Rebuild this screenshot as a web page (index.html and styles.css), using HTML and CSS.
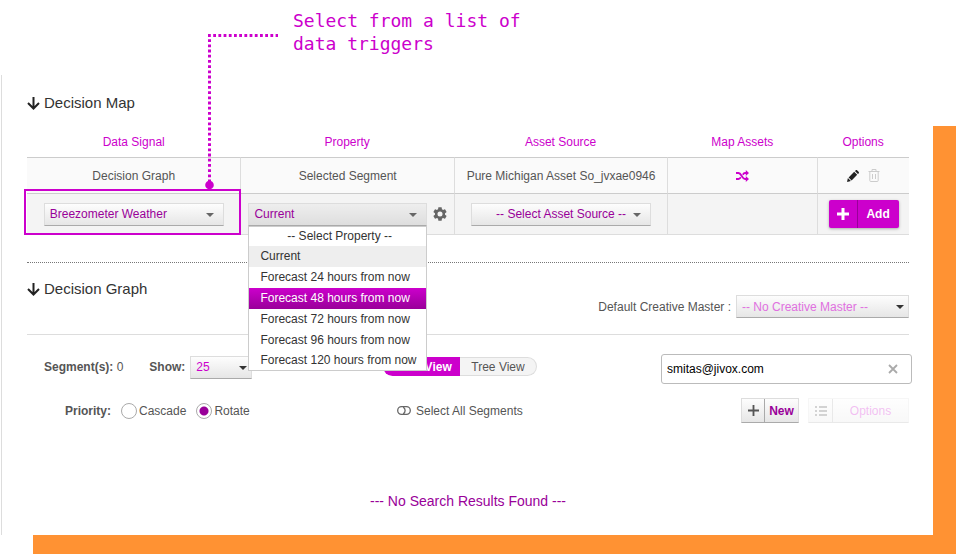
FILE: index.html
```html
<!DOCTYPE html>
<html lang="en">

<head>
  <meta charset="UTF-8">
  <meta name="viewport" content="width=device-width, initial-scale=1.0">
  <title>Decision Map</title>
  <link rel="stylesheet" href="styles.css">
</head>

<body>
  <div class="callout">
    <p>Select from a list of<br>data triggers</p>
    <svg class="connector" width="76" height="158" viewBox="0 0 76 158">
      <path d="M4 2.500H74M5.500 6.200V150" fill="none" stroke="#c0c" stroke-width="3" stroke-dasharray="2.800 2.400" />
      <circle cx="5.500" cy="152" r="4.300" fill="#c0c" />
    </svg>
  </div>

  <div class="stage">
    <main class="panel">
      <h2>
        <svg class="arrow" width="13" height="13" viewBox="0 0 13 13"><path d="M6.500 0v11M1 6l5.500 5.500L12 6" /></svg>
        Decision Map
      </h2>

      <table class="map">
        <thead>
          <tr>
            <th class="wide">Data Signal</th>
            <th class="wide">Property</th>
            <th class="wide">Asset Source</th>
            <th class="mid">Map Assets</th>
            <th>Options</th>
          </tr>
        </thead>
        <tbody>
          <tr class="saved">
            <td>Decision Graph</td>
            <td>Selected Segment</td>
            <td>Pure Michigan Asset So_jvxae0946</td>
            <td>
              <button class="icon" aria-label="Map assets">
                <svg width="13" height="12" viewBox="0 0 13 12"><path d="M0 3h2.500C5.500 3 6 9 9 9h2M0 9h2.500c1 0 1.700-.7 2.300-1.700M6.800 4.700C7.400 3.700 8 3 9 3h2" fill="none" stroke="#c0c" stroke-width="1.800" /><path d="M9.800 0L13 3l-3.200 3zM9.800 6L13 9l-3.200 3z" fill="#c0c" /></svg>
              </button>
            </td>
            <td>
              <div class="icons">
                <button class="icon" aria-label="Edit">
                  <svg width="12" height="12" viewBox="0 0 12 12"><path d="M0 12l.9-3.900 3 3zM1.600 7.400l5.600-5.600 3 3-5.600 5.600zM7.900 1.100l.7-.7c.5-.5 1.200-.5 1.700 0l1.300 1.300c.5.500.5 1.200 0 1.700l-.7.7z" fill="#222" /></svg>
                </button>
                <button class="icon" aria-label="Delete">
                  <svg width="12" height="13" viewBox="0 0 12 13"><path d="M.5 2.500h11M4 2.500v-2h4v2M1.800 2.500v9q0 1 1 1h6.400q1 0 1-1v-9M4.500 5v5M7.500 5v5" fill="none" stroke="#ccc" /></svg>
                </button>
              </div>
            </td>
          </tr>
          <tr class="editing">
            <td class="marked">
              <div class="drop">
                <select aria-label="Data signal"><option>Breezometer Weather</option></select>
              </div>
            </td>
            <td>
              <div class="property">
                <div class="drop open">
                  <select aria-label="Property"><option>Current</option></select>
                  <ul class="menu" role="listbox" aria-label="Property list">
                    <li class="none" role="option">-- Select Property --</li>
                    <li class="current" role="option">Current</li>
                    <li role="option">Forecast 24 hours from now</li>
                    <li class="active" role="option" aria-selected="true">Forecast 48 hours from now</li>
                    <li role="option">Forecast 72 hours from now</li>
                    <li role="option">Forecast 96 hours from now</li>
                    <li role="option">Forecast 120 hours from now</li>
                  </ul>
                </div>
                <button class="icon" aria-label="Property settings">
                  <svg width="14" height="14" viewBox="2 2 20 20"><path fill="#666" d="M19.140 12.940c.04-.3.060-.61.060-.94 0-.32-.02-.64-.07-.94l2.030-1.580c.18-.14.230-.41.120-.61l-1.920-3.320c-.12-.22-.37-.29-.59-.22l-2.390.96c-.5-.38-1.030-.7-1.620-.94l-.36-2.540c-.04-.24-.24-.41-.48-.41h-3.840c-.24 0-.43.170-.47.410l-.36 2.540c-.59.240-1.130.570-1.620.940l-2.390-.96c-.22-.08-.47 0-.59.220L2.740 8.870c-.12.210-.08.470.120.610l2.030 1.580c-.05.300-.09.630-.09.940s.02.640.070.940l-2.030 1.580c-.18.140-.23.410-.12.610l1.920 3.320c.12.220.37.290.59.220l2.390-.96c.5.380 1.030.7 1.620.940l.36 2.540c.05.240.24.410.48.410h3.840c.24 0 .44-.17.470-.41l.36-2.540c.59-.24 1.130-.56 1.620-.94l2.390.96c.22.080.47 0 .59-.22l1.920-3.320c.12-.22.070-.47-.12-.61zM12 15.600A3.600 3.600 0 1 1 12 8.400a3.600 3.600 0 0 1 0 7.200z" /></svg>
                </button>
              </div>
            </td>
            <td>
              <div class="drop centered">
                <select aria-label="Asset source"><option>-- Select Asset Source --</option></select>
              </div>
            </td>
            <td></td>
            <td>
              <button class="split add">
                <span class="sign"><svg width="12" height="12" viewBox="0 0 12 12"><path d="M6 0v12M0 6h12" /></svg></span>
                <span class="word">Add</span>
              </button>
            </td>
          </tr>
        </tbody>
      </table>

      <section class="graph">
        <header class="graph-head">
          <h2>
            <svg class="arrow" width="13" height="13" viewBox="0 0 13 13"><path d="M6.500 0v11M1 6l5.500 5.500L12 6" /></svg>
            Decision Graph
          </h2>
          <div class="master">
            <label for="master">Default Creative Master :</label>
            <div class="drop dark">
              <select id="master"><option>-- No Creative Master --</option></select>
            </div>
          </div>
        </header>

        <div class="tools">
          <div class="counts">
            <span><b>Segment(s):</b> 0</span>
            <label for="show">Show:</label>
            <div class="drop small">
              <select id="show"><option>25</option></select>
            </div>
            <span>In View</span>
          </div>
          <div class="views">
            <button class="active">Form View</button>
            <button>Tree View</button>
          </div>
          <div class="search">
            <input type="text" value="smitas@jivox.com" aria-label="Search">
            <button class="icon" aria-label="Clear">
              <svg width="10" height="10" viewBox="0 0 10 10"><path d="M1 1l8 8M9 1L1 9" fill="none" stroke="#aaa" stroke-width="1.800" /></svg>
            </button>
          </div>

          <div class="priority">
            <b>Priority:</b>
            <label><input type="radio" name="priority">Cascade</label>
            <label><input type="radio" name="priority" checked>Rotate</label>
          </div>
          <button class="select-all">
            <svg width="14" height="9" viewBox="0 0 14 9"><path d="M4.500.7h5a3.800 3.800 0 0 1 0 7.600h-5a3.800 3.800 0 0 1 0-7.600zM6.200 1.200a3.800 3.800 0 0 1 0 6.600" fill="none" stroke="#666" stroke-width="1.300" /></svg>
            Select All Segments
          </button>
          <div class="actions">
            <button class="split">
              <span class="sign"><svg width="11" height="11" viewBox="0 0 12 12"><path d="M6 0v12M0 6h12" /></svg></span>
              <span class="word">New</span>
            </button>
            <button class="split options" disabled>
              <span class="sign"><svg width="12" height="10" viewBox="0 0 12 10"><path d="M0 1h2M0 5h2M0 9h2M4 1h8M4 5h8M4 9h8" /></svg></span>
              <span class="word">Options</span>
            </button>
          </div>
        </div>

        <p class="empty">--- No Search Results Found ---</p>
      </section>
    </main>
  </div>
</body>

</html>
```
FILE: styles.css
```css
* {
  margin: 0;
  padding: 0;
  box-sizing: border-box;
}

body {
  background-color: #fff;
  color: #555;
  font: 12px/16px "Liberation Sans", Arial, sans-serif;
}

button,
input,
select {
  font: inherit;
  color: inherit;
}

button {
  border: 0;
  background: none;
  cursor: pointer;
}

li {
  list-style: none;
}

svg {
  display: block;
}

/* note above the panel */
.callout {
  position: relative;
  height: 75px;
  padding: 9px 0 0 293px;
  color: #c0c;
  font: 18px/23px "DejaVu Sans Mono", monospace;
}

.connector {
  position: absolute;
  left: 204px;
  top: 33px;
  z-index: 3;
}

/* white panel with the orange block behind it */
.stage {
  position: relative;
  padding: 0 25px 20px 1px;
}

.stage::before {
  content: "";
  position: absolute;
  top: 51px;
  right: 2px;
  bottom: 1px;
  left: 33px;
  background-color: #ff9233;
}

.panel {
  position: relative;
  padding: 18px 24px 24px 25px;
  border-left: 1px solid #ddd;
  background-color: #fff;
}

h2 {
  display: flex;
  align-items: center;
  gap: 4px;
  color: #333;
  font-size: 15px;
  font-weight: normal;
  line-height: 20px;
}

.arrow path {
  fill: none;
  stroke: #222;
  stroke-width: 2;
}

/* decision map */
.map {
  width: 100%;
  margin-top: 14px;
  table-layout: fixed;
  border-spacing: 0;
  border-bottom: 1px solid #ddd;
  text-align: center;
}

.map th {
  height: 30px;
  color: #c0c;
  font-weight: normal;
}

.map .wide {
  width: 24.2%;
}

.map .mid {
  width: 17%;
}

.map td {
  border-top: 1px solid #ccc;
  border-left: 1px solid #ddd;
}

.map td:first-child {
  border-left: 0;
}

.saved td {
  height: 36px;
  background-color: #fafafa;
}

.editing td {
  height: 41px;
  background-color: #f4f4f4;
}

.saved .icon {
  vertical-align: middle;
}

.icons {
  display: flex;
  justify-content: center;
  gap: 9px;
}

.marked {
  position: relative;
}

.marked::after {
  content: "";
  position: absolute;
  inset: -5px -1px -1px -3px;
  border: 2px solid #c0c;
  pointer-events: none;
}

/* drop-downs */
.drop {
  position: relative;
  width: 180px;
  margin: 0 auto;
}

.drop select {
  display: block;
  width: 100%;
  height: 23px;
  padding: 0 24px 0 5px;
  appearance: none;
  border: 1px solid #ddd;
  border-bottom-color: #aaa;
  border-radius: 0;
  background: linear-gradient(#fdfdfd, #e6e6e6);
  color: #909;
}

.drop::after {
  content: "";
  position: absolute;
  top: 10px;
  right: 10px;
  border: 4px solid transparent;
  border-top-color: #666;
  border-bottom: 0;
  pointer-events: none;
}

.centered select {
  padding: 0 20px;
  text-align-last: center;
}

.property {
  display: flex;
  align-items: center;
  gap: 6px;
  padding: 0 7px;
}

.open {
  margin: 0;
}

.open select {
  background: linear-gradient(#eee, #dedede);
}

.menu {
  position: absolute;
  top: 100%;
  left: 0;
  z-index: 2;
  width: 100%;
  border: 1px solid #ccc;
  background-color: #fff;
  color: #333;
  text-align: left;
}

.menu li {
  height: 21px;
  padding-left: 11px;
  line-height: 21px;
  white-space: nowrap;
}

.menu li:first-child,
.menu li:last-child {
  height: 19px;
  line-height: 19px;
}

.menu .none {
  padding-right: 7px;
  text-align: center;
}

.menu .current {
  background-color: #eee;
}

.menu .active {
  background: linear-gradient(#c0c, #909);
  color: #fff;
}

.dark {
  width: 173px;
}

.dark select {
  color: #e070e0;
}

.small {
  width: 62px;
}

.small select {
  color: #c0c;
}

.dark::after,
.small::after {
  right: 5px;
  border-top-color: #333;
}

/* two-part buttons */
.split {
  display: inline-flex;
  height: 25px;
  border: 1px solid #ddd;
  border-bottom-color: #aaa;
  background: linear-gradient(#fdfdfd, #e6e6e6);
  color: #909;
  font-weight: bold;
  vertical-align: middle;
}

.split span {
  display: flex;
  align-items: center;
  justify-content: center;
}

.split .sign {
  width: 23px;
  border-right: 1px solid #aaa;
}

.split .word {
  width: 33px;
}

.split path {
  fill: none;
  stroke: #555;
  stroke-width: 2;
}

.add {
  height: 28px;
  border: 0;
  border-radius: 2px;
  background: #c0c;
  box-shadow: 0 1px 3px #aaa;
  color: #fff;
}

.add .sign {
  width: 29px;
  border-right-color: #909;
}

.add .word {
  width: 41px;
}

.add path {
  stroke: #fff;
  stroke-width: 3;
}

.options {
  opacity: 0.25;
  font-weight: normal;
  color: #c0c;
}

.options .sign {
  width: 24px;
}

.options .word {
  width: 75px;
}

/* decision graph */
.graph {
  margin-top: 27px;
  border-top: 1px dotted #777;
}

.graph-head {
  display: flex;
  align-items: flex-start;
  justify-content: space-between;
  padding: 16px 0;
  border-bottom: 1px solid #ddd;
}

.master {
  display: flex;
  align-items: center;
  gap: 5px;
  margin-top: 16px;
}

.tools {
  display: grid;
  grid-template-columns: 356px 1fr 251px;
  gap: 14px 0;
  margin-right: -3px;
  padding-top: 19px;
}

.counts {
  display: flex;
  align-items: center;
  height: 26px;
  padding-left: 17px;
}

.counts label {
  margin-left: 26px;
  font-weight: bold;
}

.counts .drop {
  margin: 0 8px 0 5px;
}

.views {
  display: flex;
  margin-top: 3px;
}

.views button {
  width: 77px;
  height: 19px;
  border: 1px solid #ddd;
  border-left: 0;
  border-radius: 0 10px 10px 0;
  background-color: #f4f4f4;
}

.views .active {
  border: 0;
  border-radius: 10px 0 0 10px;
  background-color: #c0c;
  color: #fff;
  font-weight: bold;
}

.search {
  display: flex;
  align-items: center;
  height: 30px;
  padding: 0 13px 0 5px;
  border: 1px solid #bbb;
  border-radius: 3px;
}

.search input {
  flex: 1;
  border: 0;
  outline: 0;
  color: #000;
}

.priority {
  display: flex;
  align-items: center;
  padding-left: 38px;
}

.priority label {
  display: flex;
  align-items: center;
  gap: 2px;
  margin-left: 10px;
}

.priority input {
  width: 16px;
  height: 16px;
  appearance: none;
  border: 1px solid #aaa;
  border-radius: 50%;
  background-color: #fff;
}

.priority input:checked {
  background: radial-gradient(circle, #909 4px, #fff 5px);
}

.select-all {
  display: flex;
  align-items: center;
  gap: 5px;
  padding-left: 14px;
}

.actions {
  display: flex;
  justify-content: flex-end;
  gap: 9px;
  padding-right: 3px;
}

.empty {
  margin-top: 68px;
  color: #909;
  font-size: 14px;
  line-height: 20px;
  text-align: center;
}
```
